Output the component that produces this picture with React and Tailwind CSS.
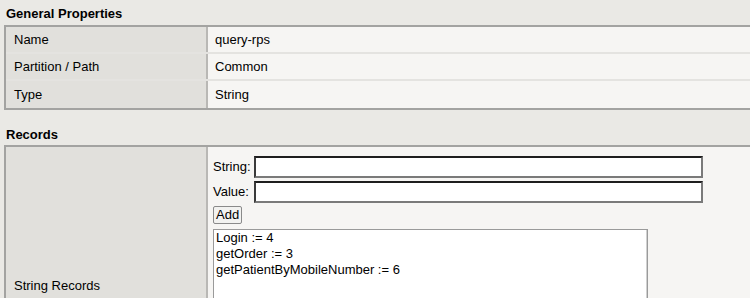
export default function App() {
  const records = ["Login := 4", "getOrder := 3", "getPatientByMobileNumber := 6"];

  return (
    <div className="min-h-screen bg-[#eae9e5] text-[13px] text-black font-['Liberation_Sans',Arial,sans-serif] overflow-hidden">
      {/* General Properties */}
      <h2 className="pl-[6px] pt-[6px] h-[25px] leading-[16px] font-bold text-[13px]">General Properties</h2>
      <div className="ml-[4px] border-t-2 border-l-2 border-b-2 border-[#a3a3a1]">
        {[
          ["Name", "query-rps"],
          ["Partition / Path", "Common"],
          ["Type", "String"],
        ].map(([label, value], i) => (
          <div key={label} className={"grid grid-cols-[200px_2px_1fr] h-[27px] " + (i < 2 ? "border-b-2 border-[#e4e3e0]" : "")}>
            <div className="bg-[#e1e0dc] pl-[8px] flex items-center">{label}</div>
            <div className="bg-[#b9b8b5]" />
            <div className="bg-[#f6f5f3] pl-[7px] flex items-center">{value}</div>
          </div>
        ))}
      </div>

      {/* Records */}
      <h2 className="pl-[6px] pt-[17px] h-[35px] leading-[16px] font-bold text-[13px]">Records</h2>
      <div className="ml-[4px] border-t-2 border-l-2 border-[#a3a3a1] grid grid-cols-[200px_2px_1fr]">
        <div className="bg-[#e1e0dc] pl-[8px] pt-[129px]">String Records</div>
        <div className="bg-[#b9b8b5]" />
        <div className="bg-[#f6f5f3] pl-[5px] pt-[9px] pb-[20px]">
          <div className="flex items-center h-[22px]">
            <span className="w-[41px]">String:</span>
            <input className="w-[449px] h-[22px] bg-white border-2 border-t-[#1e1e1e] border-l-[#3a3a3a] border-r-[#7a7a7a] border-b-[#7a7a7a] outline-none" />
          </div>
          <div className="flex items-center h-[22px] mt-[3px]">
            <span className="w-[41px]">Value:</span>
            <input className="w-[449px] h-[22px] bg-white border-2 border-t-[#1e1e1e] border-l-[#3a3a3a] border-r-[#7a7a7a] border-b-[#7a7a7a] outline-none" />
          </div>
          <button className="mt-[3px] h-[18px] px-[2px] leading-[14px] bg-[#f2f2f0] border border-[#8a8a8a] rounded-[2px] text-[13px]">
            Add
          </button>
          <div className="mt-[4px] w-[435px] h-[110px] bg-white border border-[#9a9a9a] shadow-[inset_-1px_0_0_#d0d0d0] px-[2px] leading-[16px]">
            {records.map((r) => (
              <div key={r}>{r}</div>
            ))}
          </div>
        </div>
      </div>
    </div>
  );
}
